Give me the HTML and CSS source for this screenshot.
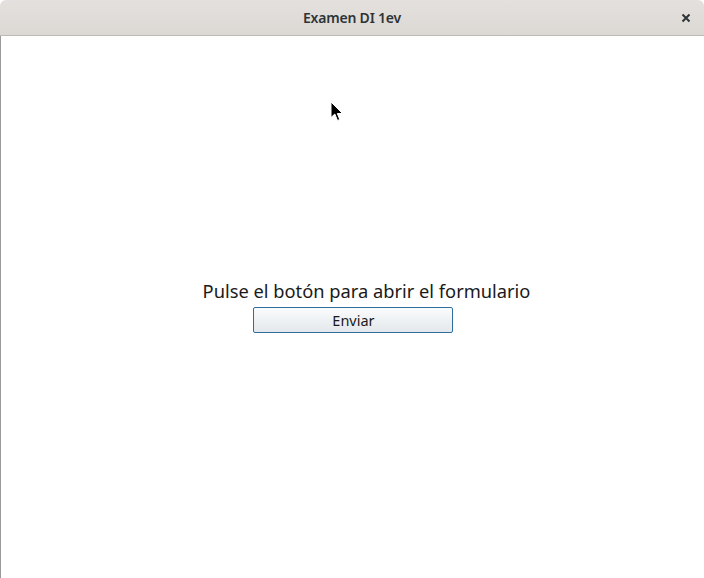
FILE: index.html
```html
<!DOCTYPE html>
<html>
<head>
<meta charset="utf-8">
<link rel="stylesheet" href="styles.css">
</head>
<body>
<div class="window">
  <header class="titlebar">
    <span class="title">Examen DI 1ev</span>
    <button class="close" aria-label="Cerrar">
      <svg width="10" height="10" viewBox="0 0 10 10"><path d="M1.5 1.5 L8.5 8.5 M8.5 1.5 L1.5 8.5" stroke="#2e3436" stroke-width="2" fill="none"/></svg>
    </button>
  </header>
  <main class="content">
    <div class="stack">
      <p class="label">Pulse el botón para abrir el formulario</p>
      <button class="btn">Enviar</button>
    </div>
    <svg class="cursor" width="15" height="22" viewBox="0 0 15 22"><path d="M1 1 L1 16.5 L4.8 13 L7.5 19.5 L9.8 18.5 L7.3 12.5 L12.5 12.5 Z" fill="#000" stroke="#fff" stroke-width="1"/></svg>
  </main>
</div>
</body>
</html>
```
FILE: styles.css
```css
html, body { margin: 0; padding: 0; background: #fff; }
.window {
  width: 704px; height: 578px;
  display: flex; flex-direction: column;
  font-family: "Open Sans", "Noto Sans", sans-serif;
  overflow: hidden;
}
.titlebar {
  height: 35px;
  flex: none;
  background: linear-gradient(#e3e0dd, #dcd9d5);
  border-bottom: 1px solid #bdb9b4;
  border-radius: 6px 6px 0 0;
  display: flex; align-items: center; justify-content: center;
  position: relative;
}
.title {
  font-family: "Noto Sans", sans-serif;
  font-size: 14px; font-weight: 600; color: #2e3436;
  letter-spacing: -0.2px;
}
.close {
  position: absolute; right: 8px; top: 8px;
  width: 20px; height: 20px; border: 0; background: transparent; padding: 0;
  display: flex; align-items: center; justify-content: center;
}
.content {
  flex: 1;
  position: relative;
  display: flex; align-items: center; justify-content: center;
  border-left: 1px solid #9a9a9a;
  padding-bottom: 2px;
}
.stack { display: flex; flex-direction: column; align-items: center; gap: 4px; margin-left: 2px; }
.label {
  margin: 0;
  padding-left: 26px;
  font-family: "Noto Sans", sans-serif;
  font-size: 18.3px; color: #1a1a1a; line-height: 24px;
  white-space: nowrap;
}
.btn {
  width: 200px; height: 26px;
  border: 1px solid #2d6e9d; border-radius: 2px;
  background: linear-gradient(#fafbfc, #e3e8ec);
  font-family: "Noto Sans", sans-serif; font-size: 14.5px; color: #1a1a1a;
  padding: 0;
}
.cursor { position: absolute; left: 329px; top: 65px; }
```
